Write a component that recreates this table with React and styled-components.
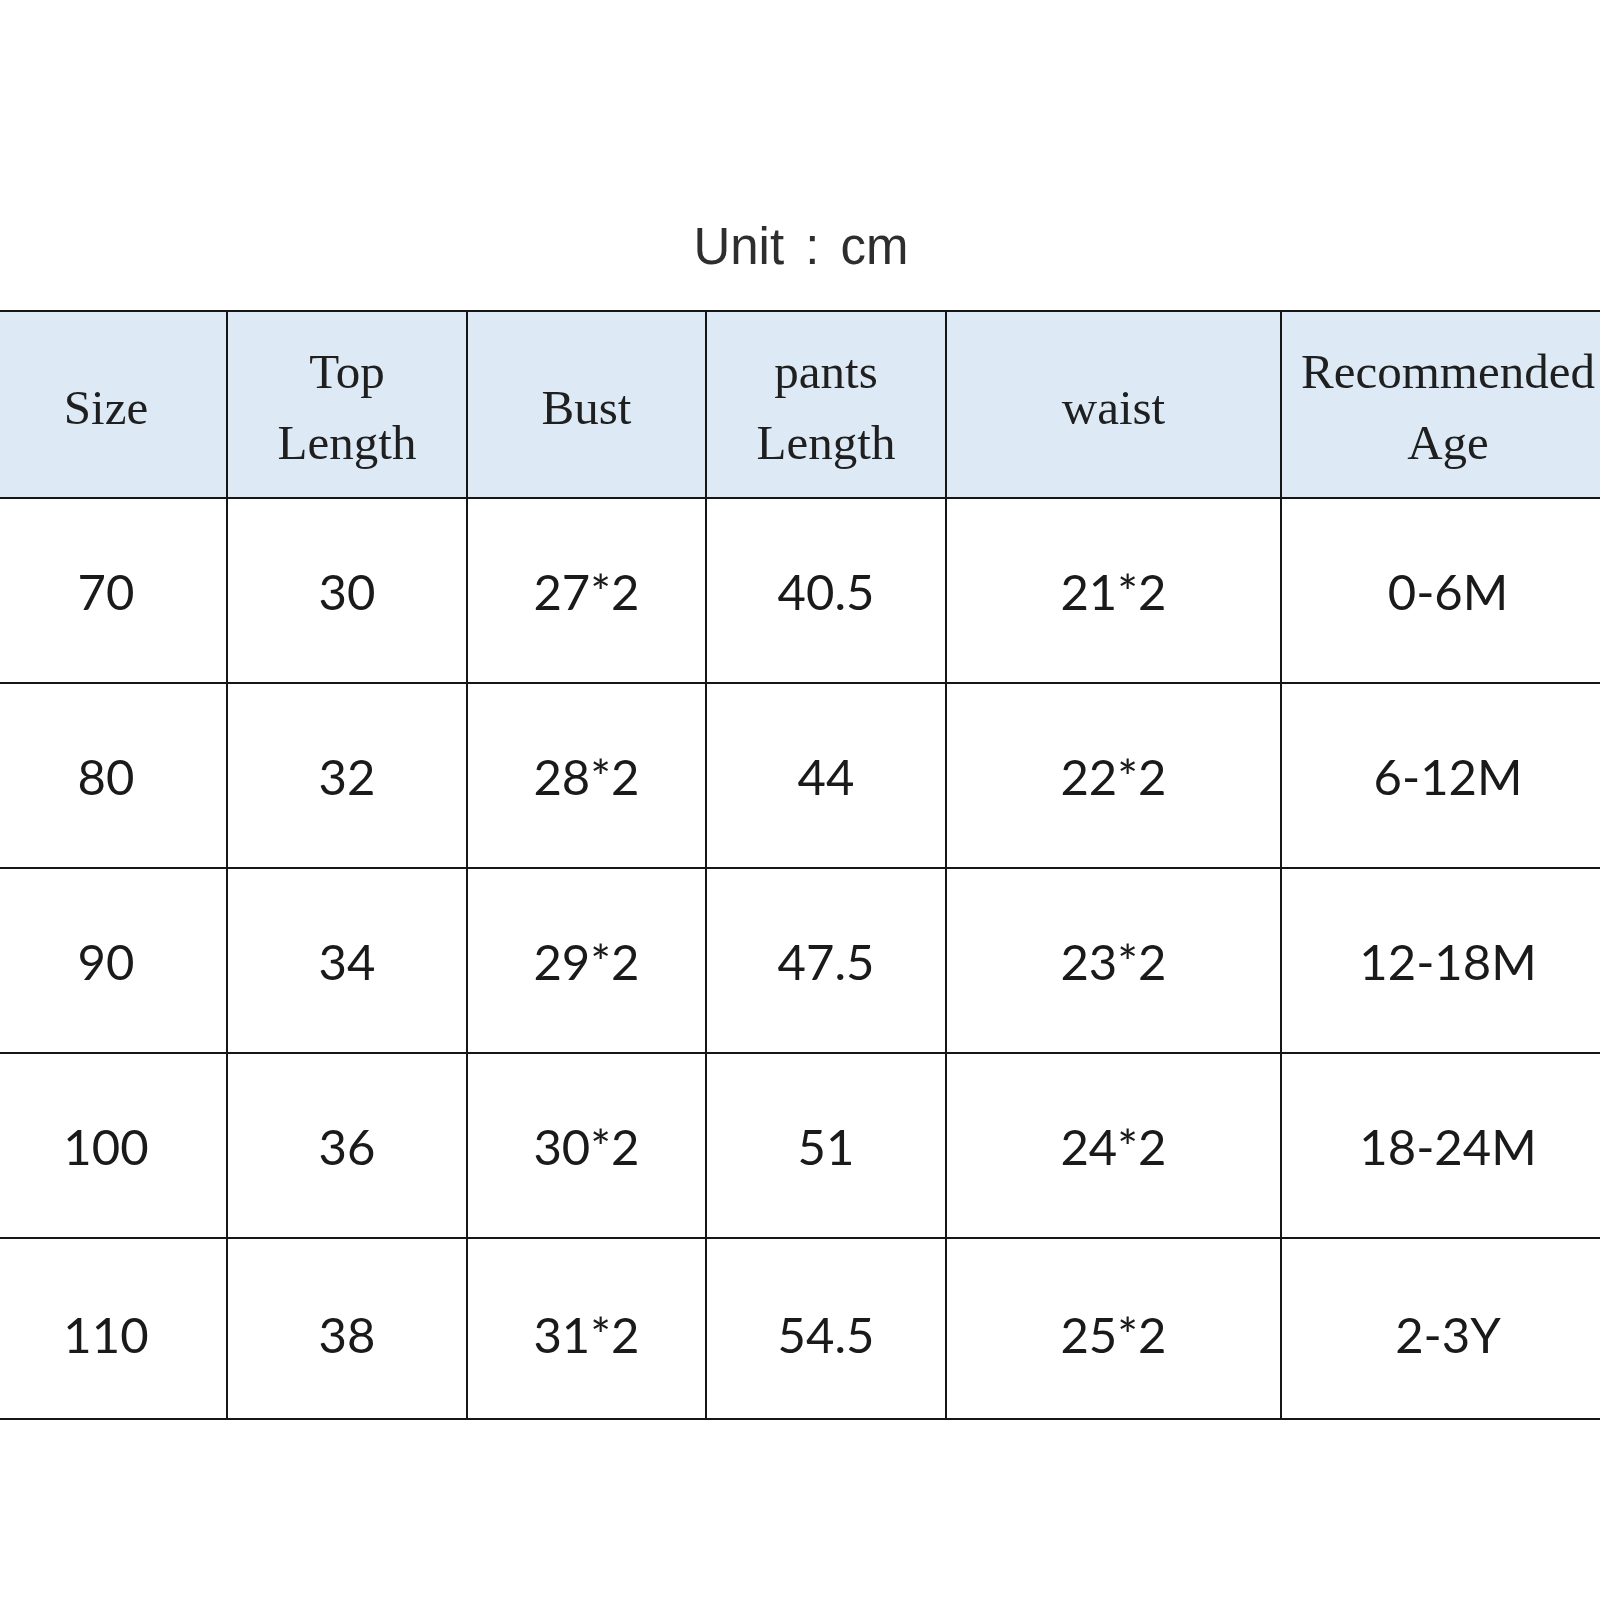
import styled, { createGlobalStyle } from "styled-components";

const columns = [242, 240, 239, 240, 335, 334];

const headers = [
  ["Size"],
  ["Top", "Length"],
  ["Bust"],
  ["pants", "Length"],
  ["waist"],
  ["Recommended", "Age"],
];

const rows = [
  ["70", "30", "27*2", "40.5", "21*2", "0-6M"],
  ["80", "32", "28*2", "44", "22*2", "6-12M"],
  ["90", "34", "29*2", "47.5", "23*2", "12-18M"],
  ["100", "36", "30*2", "51", "24*2", "18-24M"],
  ["110", "38", "31*2", "54.5", "25*2", "2-3Y"],
];

const App = () => {
  return (
    <>
      <GlobalStyle />
      <Page>
        <Unit>Unit : cm</Unit>
        <SizeTable>
          <colgroup>
            {columns.map((w, i) => (
              <col key={i} style={{ width: w }} />
            ))}
          </colgroup>
          <thead>
            <tr>
              {headers.map((lines, i) => (
                <Th key={i}>
                  {lines.map((l, j) => (
                    <HeadLine key={j}>{l}</HeadLine>
                  ))}
                </Th>
              ))}
            </tr>
          </thead>
          <tbody>
            {rows.map((row, i) => (
              <Row key={i} $last={i === rows.length - 1}>
                {row.map((cell, j) => (
                  <Td key={j}>{cell}</Td>
                ))}
              </Row>
            ))}
          </tbody>
        </SizeTable>
      </Page>
    </>
  );
};

export default App;

const GlobalStyle = createGlobalStyle`
  html, body {
    margin: 0;
    padding: 0;
    background: #ffffff;
    overflow: hidden;
  }
`;

const Page = styled.div`
  width: 1600px;
  height: 1600px;
  overflow: hidden;
  padding-top: 217px;
  box-sizing: border-box;
`;

const Unit = styled.div`
  font-family: "Liberation Sans", sans-serif;
  font-size: 51px;
  line-height: 60px;
  word-spacing: 7px;
  color: #2e2e2e;
  text-align: center;
  margin-bottom: 33px;
  padding-left: 2px;
`;

const SizeTable = styled.table`
  margin-left: -16px;
  width: 1630px;
  table-layout: fixed;
  border-collapse: collapse;
  border-top: 2px solid #161616;
`;

const Th = styled.th`
  height: 180px;
  padding: 5px 0 0;
  background: #ddeaf6;
  border: 2px solid #161616;
  border-top: none;
  font-family: "Liberation Serif", serif;
  font-weight: normal;
  font-size: 49px;
  color: #1f1f1f;
  text-align: center;
  vertical-align: middle;
`;

const HeadLine = styled.div`
  line-height: 71px;
`;

const Row = styled.tr`
  height: ${(p) => (p.$last ? "181px" : "185px")};

  td {
    padding-top: ${(p) => (p.$last ? "10px" : "0")};
  }
`;

const Td = styled.td`
  padding: 0;
  border: 2px solid #161616;
  font-family: Lato, "Open Sans", sans-serif;
  font-size: 49px;
  color: #1a1a1a;
  text-align: center;
  vertical-align: middle;
`;
